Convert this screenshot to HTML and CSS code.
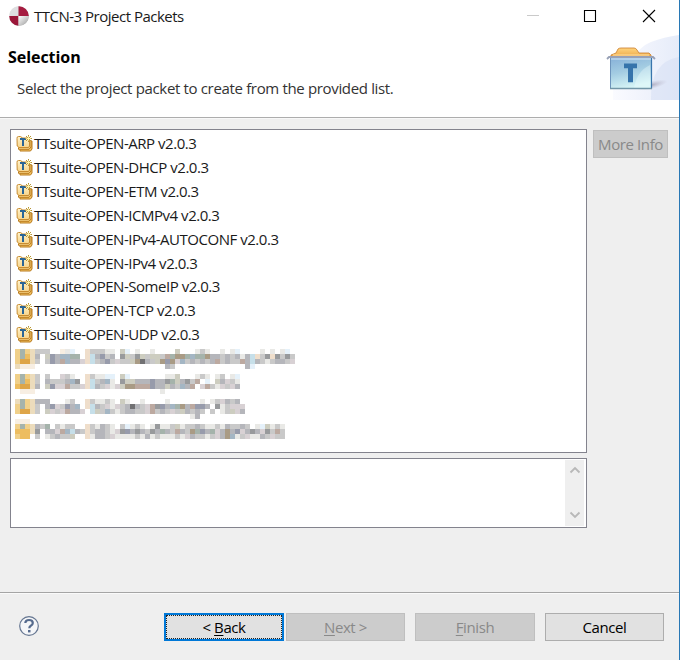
FILE: index.html
```html
<!DOCTYPE html>
<html lang="en">
<head>
<meta charset="utf-8">
<title>TTCN-3 Project Packets</title>
<link rel="stylesheet" href="styles.css">
</head>
<body>
<svg width="0" height="0" class="defs" aria-hidden="true">
  <defs>
    <linearGradient id="gold" x1="0" y1="0" x2="0" y2="1"><stop offset="0" stop-color="#fff3cc"/><stop offset="1" stop-color="#f7d58c"/></linearGradient>
    <symbol id="packet" viewBox="0 0 17 17">
      <path d="M4 14.500V16h10.500L16 14V6h-2" fill="#f2c466" stroke="#b97a1c"/>
      <path d="M2.500 12.500V14.300h10.500L15 12V5.500h-2" fill="#f7d384" stroke="#b97a1c"/>
      <path d="M1 3.500V3q0-1.500 1.500-1.500h2Q5.500 1.500 6 3h6q1.500 0 1.500 1.500V11q0 1.500-1.500 1.500H3L1.200 11z" fill="url(#gold)" stroke="#c88c30"/>
      <path d="M4 3h6v2H8v6H6V5H4z" fill="#2b6697"/>
      <path d="M12.500 0v7M9 3.500h7M10 1l5 5M15 1l-5 5" stroke="#b69435" stroke-width="1"/>
      <path d="M12.500 1.500v4M10.500 3.500h4" stroke="#fff4ac" stroke-width="1.200"/>
    </symbol>
  </defs>
</svg>
<div class="window">
  <header class="banner">
    <div class="titlebar">
      <svg class="logo" viewBox="0 0 20 20">
        <defs><linearGradient id="silver" x1="0" y1="0" x2="1" y2="1"><stop offset="0" stop-color="#fff"/><stop offset="1" stop-color="#999"/></linearGradient></defs>
        <circle cx="10" cy="10" r="9.800" fill="url(#silver)"/>
        <path d="M9.500 0.200A9.800 9.800 0 0 0 .2 9.500H9.500z" fill="#dedee0"/>
        <path d="M9.500 10V.3A9.800 9.800 0 0 1 19.800 10z" fill="#a51c40"/>
        <path d="M9.500 10v9.800A9.800 9.800 0 0 1 .2 10z" fill="#9b1739"/>
        <path d="M9.500 10h10.300A9.800 9.800 0 0 1 9.500 19.800z" fill="url(#silver)"/>
      </svg>
      <span class="title">TTCN-3 Project Packets</span>
      <svg class="controls" width="132" height="16" viewBox="0 0 132 16" fill="none">
        <path d="M0 7.500h12" stroke="#cacaca"/>
        <path d="M57.500 2.500h11v11h-11z" stroke="#000" stroke-width="1.100"/>
        <path d="M116 2l12 12M128 2L116 14" stroke="#000" stroke-width="1.100"/>
      </svg>
    </div>
    <div class="intro">
      <h1>Selection</h1>
      <p>Select the project packet to create from the provided list.</p>
    </div>
    <svg class="artwork" viewBox="0 0 80 70">
      <defs>
        <linearGradient id="haze"><stop offset="0" stop-color="#fafbff"/><stop offset=".5" stop-color="#f0f3fc"/><stop offset="1" stop-color="#e6ecf9"/></linearGradient>
        <linearGradient id="glass" x1="0" y1="0" x2=".3" y2="1"><stop offset="0" stop-color="#86b0d8"/><stop offset=".5" stop-color="#a3cce2"/><stop offset="1" stop-color="#d4f3f5"/></linearGradient>
        <linearGradient id="folder" x1="0" y1="0" x2="0" y2="1"><stop offset="0" stop-color="#ffd47d"/><stop offset="1" stop-color="#e79a38"/></linearGradient>
        <radialGradient id="shade"><stop offset="0" stop-color="#9c98ac" stop-opacity=".7"/><stop offset="1" stop-color="#b9b5c7" stop-opacity="0"/></radialGradient>
      </defs>
      <path d="M13 65V42C30 31 34 14 51 7Q64 2 79 0V65z" fill="url(#haze)"/>
      <path d="M51 65Q50 27 79 22V65z" fill="#d4def4" opacity=".5"/>
      <ellipse cx="52" cy="50" rx="16" ry="4" fill="url(#shade)" transform="rotate(-14 52 50)"/>
      <path d="M11 23v-3l5-2 2-4q1-1 3-1h13q2 0 3 2l2 3h10l2 2v5z" fill="url(#folder)" stroke="#ca7c2b" stroke-width=".8"/>
      <path d="M13 20h36" stroke="#ffe0a3" stroke-width="1"/>
      <path d="M10.500 22.500h41v31h-41z" fill="url(#glass)" stroke="#6d94bc"/>
      <path d="M34 53Q37 36 50 30v23z" fill="#f1ffff" opacity=".35"/>
      <path d="M51.500 23v30.500" stroke="#3975ac" stroke-width="1.200"/>
      <path d="M10 53.500h42" stroke="#7397a8" stroke-width="1.300"/>
      <path d="M7 24l2-2h44l2 2" fill="none" stroke="#98a1b6" stroke-width="1.800"/>
      <path d="M11 24h40" stroke="#d7e8f6"/>
      <path d="M24 28.500h13v4.800h-4v14h-5v-14h-4z" fill="#3674ab"/>
    </svg>
  </header>
  <main class="content">
    <div class="panes">
      <div class="list">
        <ul>
          <li><svg><use href="#packet"/></svg><span>TTsuite-OPEN-ARP v2.0.3</span></li>
          <li><svg><use href="#packet"/></svg><span>TTsuite-OPEN-DHCP v2.0.3</span></li>
          <li><svg><use href="#packet"/></svg><span>TTsuite-OPEN-ETM v2.0.3</span></li>
          <li><svg><use href="#packet"/></svg><span>TTsuite-OPEN-ICMPv4 v2.0.3</span></li>
          <li><svg><use href="#packet"/></svg><span>TTsuite-OPEN-IPv4-AUTOCONF v2.0.3</span></li>
          <li><svg><use href="#packet"/></svg><span>TTsuite-OPEN-IPv4 v2.0.3</span></li>
          <li><svg><use href="#packet"/></svg><span>TTsuite-OPEN-SomeIP v2.0.3</span></li>
          <li><svg><use href="#packet"/></svg><span>TTsuite-OPEN-TCP v2.0.3</span></li>
          <li><svg><use href="#packet"/></svg><span>TTsuite-OPEN-UDP v2.0.3</span></li>
        </ul>
        <svg class="mosaic" id="mosaic" width="280" height="90" shape-rendering="crispEdges"></svg>
      </div>
      <div class="description">
        <div class="scrollbar">
          <svg viewBox="0 0 12 8"><path d="M1.500 6.500L6 2l4.500 4.500"/></svg>
          <svg viewBox="0 0 12 8"><path d="M1.500 1.500L6 6l4.500-4.500"/></svg>
        </div>
      </div>
    </div>
    <button class="button more" disabled>More Info</button>
  </main>
  <footer class="footer">
    <svg class="help" viewBox="0 0 22 22" fill="none"><circle cx="11" cy="11" r="9.300" fill="#f5f6f8" stroke="#657691" stroke-width="1.200"/><path d="M7.300 8q.2-3 3.700-3 3.800 0 3.800 3 0 1.700-2 2.800-1.500.8-1.500 2.500" stroke="#566b8e" stroke-width="2.200"/><path d="M10 15h2.500v2.400H10z" fill="#566b8e"/></svg>
    <button class="button back"><span>&lt; <u>B</u>ack</span></button>
    <button class="button next" disabled><span><u>N</u>ext &gt;</span></button>
    <button class="button finish" disabled><span><u>F</u>inish</span></button>
    <button class="button cancel">Cancel</button>
  </footer>
</div>
<script src="mosaic.js"></script>
</body>
</html>
```
FILE: styles.css
```css
* { box-sizing: border-box; }
body { margin: 0; font-family: "Open Sans", "Noto Sans", sans-serif; font-size: 15px; color: #1a1a1a; }
.defs { display: block; }
.window { width: 680px; height: 660px; display: flex; flex-direction: column; background: #efefef; border-right: 1px solid #2878b5; overflow: hidden; }
.banner { position: relative; height: 118px; flex: none; background: #fff; border-bottom: 1px solid #adadad; }
.titlebar { display: flex; align-items: center; height: 32px; padding: 0 20px 0 9px; }
.logo { width: 20px; height: 20px; margin-right: 5px; }
.title { letter-spacing: -.5px; white-space: nowrap; }
.controls { margin-left: auto; }
.intro { padding: 15px 0 0 8px; }
h1 { margin: 0; font-size: 16px; line-height: 20px; color: #000; letter-spacing: -.05px; }
p { margin: 11px 0 0 9px; line-height: 20px; letter-spacing: -.34px; color: #333; }
.artwork { position: absolute; right: 0; top: 35px; width: 80px; height: 70px; margin-right: -1px; }
.content { display: flex; align-items: flex-start; gap: 6px; padding: 10px 11px 0 10px; border-top: 1px solid #f8f8f8; }
.panes { width: 577px; display: flex; flex-direction: column; gap: 5px; }
.list { height: 324px; background: #fff; border: 1px solid #83838d; padding: 2px 4px; }
ul { list-style: none; margin: 0; padding: 0; }
li { display: flex; align-items: center; height: 23.880px; letter-spacing: -.47px; white-space: nowrap; }
li span { padding-bottom: 1.500px; }
li svg { width: 17px; height: 17px; margin: 0 1px 0 1px; }
.mosaic { display: block; margin-top: 2px; }
.description { height: 70px; display: flex; justify-content: flex-end; background: #fff; border: 1px solid #83838d; padding: 1px 2px; }
.scrollbar { width: 19px; background: #efefef; display: flex; flex-direction: column; align-items: center; justify-content: space-between; padding: 6px 0 7px; }
.scrollbar svg { width: 12px; height: 8px; fill: none; stroke: #b8b8b8; stroke-width: 1.800; }
.button { font: inherit; letter-spacing: -.4px; color: #000; background: #e1e1e1; border: 1px solid #adadad; height: 28px; padding: 0; border-radius: 0; white-space: nowrap; }
.button:disabled { background: #ccc; border-color: #bfbfbf; color: #898989; }
.button u { text-underline-offset: 2px; text-decoration-thickness: 1px; text-decoration-skip-ink: none; }
.more { width: 75px; margin-top: 1px; }
.footer { display: flex; margin-top: auto; height: 68px; border-top: 1px solid #a5a5a5; padding: 20px 15px 0 18px; box-shadow: inset 0 1px #fafafa; }
.help { width: 22px; height: 22px; margin-top: 2px; }
.back { width: 120px; margin-left: 124px; border: 2px solid #0078d7; }
.back span { display: flex; align-items: center; justify-content: center; white-space: pre; height: 100%; border: 1px dotted #222; }
.next { width: 119px; margin-left: 2px; }
.finish { width: 120px; margin-left: 10px; }
.cancel { width: 119px; margin-left: 10px; }
```
FILE: mosaic.js
```js
// Redacted entries are drawn as 5px colour cells.
const palette = {
  a: '#f7eee2', b: '#f0d08a', c: '#dea548', d: '#ecdcbc', e: '#edbd60',
  g: '#c9c9c9', h: '#e9e9e6', i: '#b5b6bb', j: '#989a9c', k: '#a5b3ab',
  l: '#d8d1d4', m: '#e5f1fa', n: '#efdecb', o: '#bca9a0', p: '#979bab',
  q: '#717173', r: '#c6dfe9', s: '#cdcdc0', t: '#a99b85', u: '#a4b6c4'
};
const rows = [
  'bkbdggg..ahm..nggghh.sm.h..h....s...hgh..h.hm....h.h.hm.',
  'bkedi.spiuukk.nripgi.jsgjsgssgokttkukktiigigihirngjnjgjg',
  'bccdg.gpiouiilnrgipglggstqigstptlugigigiogiggoirighgiigl',
  'daaa..........................ig..............im........',
  '........................................................',
  'bkbdg.g..lgh..nghhmm.sm.......hhs...hgh.hg.hm',
  'bkedg.igggiuj.nrgiuh.jssiiipiijksijgo.m.silghig',
  'eccdi.spllogglnriglhlsttooopiisiguio.loghlglig',
  '.aaa.........................h...............',
  '........................................................',
  'dkbdiii...hg..nghhgh.sh..h....h......h.hgligi.',
  'bkbdg.iplgpiu.nriglhlgiqiglojpiuktioppi.jhglllgnm',
  'bccdg.slgloiil.rsgughgiigglogiglgsigig.g.hgslig',
  '...................................hi.........',
  'aaa...................................................',
  'bkbdigk.ghgg..nghigh.gmhgh.hjhhgshggighhghiggig.hmshghggm',
  'eeedj.iilourigngiighljpijigjikigoigtkpiklitiplijiljgog',
  'bee.g.hgiggs..nhiiglhhhhghihghhhghligghglituhglhhiglgg'
];
const limits = [56,56,56,56,0,45,45,45,45,0,46,46,46,46,54,54,54,54];
const svg = document.getElementById('mosaic');
rows.forEach((row, y) => {
  [...row].slice(0, limits[y]).forEach((key, x) => {
    if (key === '.') return;
    const cell = document.createElementNS('http://www.w3.org/2000/svg', 'rect');
    cell.setAttribute('x', x * 5);
    cell.setAttribute('y', y * 5);
    cell.setAttribute('width', 5);
    cell.setAttribute('height', 5);
    cell.setAttribute('fill', palette[key]);
    svg.append(cell);
  });
});
```
